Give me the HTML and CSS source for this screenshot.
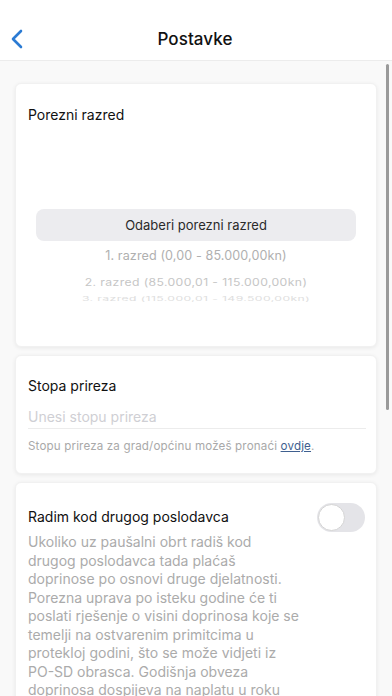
FILE: index.html
```html
<!DOCTYPE html>
<html lang="hr">
<head>
<meta charset="utf-8">
<title>Postavke</title>
<link rel="stylesheet" href="styles.css">
</head>
<body>
<div class="screen">
  <header class="topbar">
    <button class="back" aria-label="Natrag">
      <svg width="14" height="20" viewBox="0 0 14 20"><path d="M11 2 L3 10 L11 18" fill="none" stroke="#2b7bd3" stroke-width="2.6" stroke-linecap="round" stroke-linejoin="round"/></svg>
    </button>
    <h1 class="title">Postavke</h1>
    <span class="spacer"></span>
  </header>
  <main class="content">
    <section class="card card-tax">
      <h2 class="card-title">Porezni razred</h2>
      <div class="picker">
        <div class="picker-selected">Odaberi porezni razred</div>
        <div class="picker-item p1">1. razred (0,00 - 85.000,00kn)</div>
        <div class="picker-item p2">2. razred (85.000,01 - 115.000,00kn)</div>
        <div class="picker-item p3">3. razred (115.000,01 - 149.500,00kn)</div>
      </div>
    </section>
    <section class="card card-surtax">
      <h2 class="card-title">Stopa prireza</h2>
      <div class="input">Unesi stopu prireza</div>
      <p class="hint">Stopu prireza za grad/općinu možeš pronaći <a class="link">ovdje</a>.</p>
    </section>
    <section class="card card-employer">
      <div class="row">
        <h2 class="card-title">Radim kod drugog poslodavca</h2>
        <span class="toggle"><span class="knob"></span></span>
      </div>
      <p class="desc">Ukoliko uz paušalni obrt radiš kod<br>drugog poslodavca tada plaćaš<br>doprinose po osnovi druge djelatnosti.<br>Porezna uprava po isteku godine će ti<br>poslati rješenje o visini doprinosa koje se<br>temelji na ostvarenim primitcima u<br>protekloj godini, što se može vidjeti iz<br>PO-SD obrasca. Godišnja obveza<br>doprinosa dospijeva na naplatu u roku</p>
    </section>
  </main>
  <div class="scrollbar"></div>
</div>
</body>
</html>
```
FILE: styles.css
```css
* { box-sizing: border-box; }
html, body { margin: 0; padding: 0; }
body {
  width: 392px;
  height: 696px;
  overflow: hidden;
  font-family: Inter, "Noto Sans", sans-serif;
  background: #f9f9f9;
  color: #111;
}
.screen {
  position: relative;
  width: 392px;
  height: 696px;
  overflow: hidden;
}
.topbar {
  height: 61px;
  background: #fff;
  border-bottom: 1px solid #ececec;
  display: flex;
  align-items: center;
  padding: 18px 12px 0 10px;
}
.back {
  border: 0;
  background: none;
  padding: 0;
  width: 30px;
  display: flex;
  align-items: center;
}
.title {
  flex: 1;
  margin: 0;
  text-align: center;
  font-size: 17px;
  font-weight: 500;
  letter-spacing: 0.1px;
  color: #111;
}
.spacer { width: 30px; }
.content {
  padding: 22px 15px 0 15px;
  display: flex;
  flex-direction: column;
  gap: 8px;
}
.card {
  background: #fff;
  border-radius: 6px;
  box-shadow: 0 1px 4px rgba(0,0,0,0.07);
  border: 1px solid #f1f1f1;
  padding: 0 12px;
}
.card-title {
  margin: 0;
  font-size: 14px;
  font-weight: 400;
  color: #111;
}
.card-tax {
  height: 264px;
  padding-top: 22px;
}
.picker {
  margin: 86px 8px 0 8px;
  text-align: center;
  font-family: Inter, Roboto, sans-serif;
}
.picker-selected {
  height: 32px;
  line-height: 32px;
  background: #ececef;
  border-radius: 8px;
  font-size: 13px;
  color: #2a2a2a;
}
.picker-item { color: #b0b0b0; white-space: nowrap; }
.p1 { font-size: 12.6px; margin-top: 7px; line-height: 16px; letter-spacing: 0.1px; }
.p2 { font-size: 12.2px; margin-top: 12px; line-height: 14px; color: #c6c6c6; letter-spacing: 0.4px; transform: scaleY(0.85); }
.p3 { font-size: 12.2px; margin-top: 3px; line-height: 12px; color: #dedede; letter-spacing: 0.4px; transform: scaleY(0.5); }
.card-surtax {
  height: 119px;
  padding-top: 21px;
}
.input {
  margin-top: 14px;
  font-size: 14px;
  color: #cfcfd4;
  padding-bottom: 3px;
  border-bottom: 1px solid #ececec;
  margin-right: -2px;
}
.hint {
  margin: 10px 0 0 0;
  font-size: 11.6px;
  letter-spacing: 0.15px;
  color: #a9a9a9;
}
.link {
  color: #3f5f8f;
  text-decoration: underline;
}
.card-employer {
  height: 240px;
  padding-top: 20px;
  padding-right: 11px;
}
.row {
  display: flex;
  justify-content: space-between;
  align-items: flex-start;
}
.row .card-title { margin-top: 5px; }
.toggle {
  width: 48px;
  height: 29px;
  border-radius: 15px;
  background: #e4e4e8;
  display: flex;
  align-items: center;
  padding: 1px;
}
.knob {
  width: 27px;
  height: 27px;
  border-radius: 50%;
  background: #fff;
  border: 1px solid #d4d4d4;
}
.desc {
  margin: 1px 0 0 0;
  font-size: 14px;
  line-height: 18.5px;
  color: #ababab;
}
.scrollbar {
  position: absolute;
  left: 386px;
  top: 64px;
  width: 3px;
  height: 346px;
  border-radius: 2px;
  background: #9a9a9a;
}
```
